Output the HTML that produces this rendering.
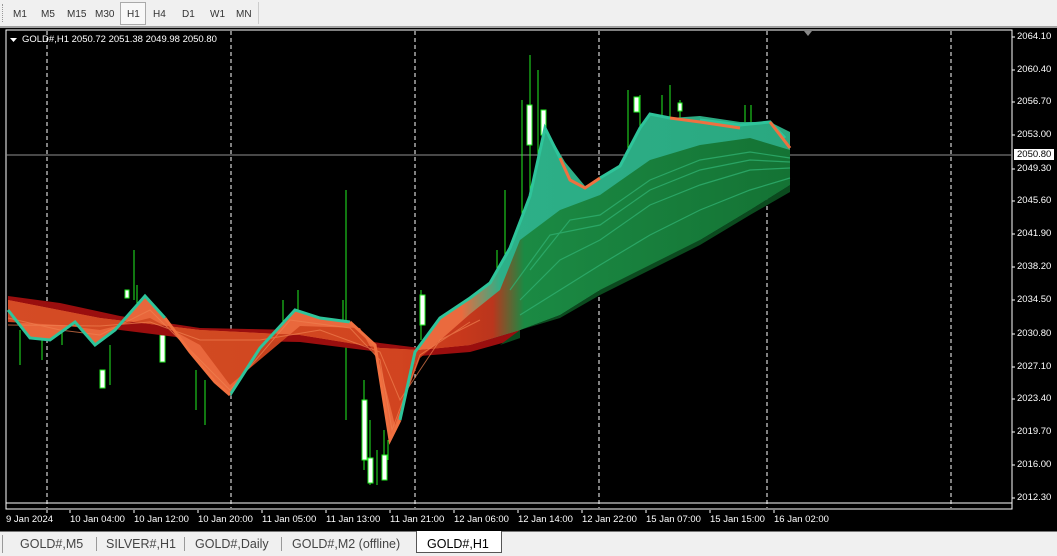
<!DOCTYPE html><html><head><meta charset="utf-8"><style>
body{margin:0;width:1057px;height:555px;overflow:hidden;background:#000;font-family:"Liberation Sans",Tahoma,sans-serif;position:relative}
.tb{position:absolute;left:0;top:0;width:1057px;height:26px;background:#f0f0f0;border-bottom:2px solid #a0a0a0}
.tb span{position:absolute;top:9px;font-size:10px;color:#333}
.tabs{position:absolute;left:0;top:531px;width:1057px;height:24px;background:#f0f0f0;border-top:1px solid #777}
.tabs span{position:absolute;top:5px;font-size:12.5px;color:#444}
.pl{position:absolute;left:1017px;font-size:9.5px;color:#fff}
.tl{position:absolute;top:514px;font-size:9.5px;color:#fff}
</style></head><body>
<div class="tb">
<div style="position:absolute;left:2px;top:4px;width:3px;height:18px;border-left:1px dotted #999"></div>
<span style="left:13px">M1</span><span style="left:41px">M5</span><span style="left:67px">M15</span><span style="left:95px">M30</span>
<div style="position:absolute;left:120px;top:2px;width:24px;height:21px;border:1px solid #aaa;background:#f8f8f8"></div>
<span style="left:127px">H1</span><span style="left:153px">H4</span><span style="left:182px">D1</span><span style="left:210px">W1</span><span style="left:236px">MN</span>
<div style="position:absolute;left:258px;top:2px;height:22px;border-left:1px solid #ccc"></div>
</div>
<svg style="position:absolute;left:0;top:28px" width="1057" height="503" viewBox="0 28 1057 503">
<defs>
<linearGradient id="g1" x1="8" x2="790" gradientUnits="userSpaceOnUse" y1="0" y2="0">
<stop offset="0" stop-color="#e8653a"/><stop offset="0.58" stop-color="#ea6a3e"/><stop offset="0.63" stop-color="#2db088"/><stop offset="1" stop-color="#2aa880"/></linearGradient>
<linearGradient id="g2" x1="8" x2="790" gradientUnits="userSpaceOnUse" y1="0" y2="0">
<stop offset="0" stop-color="#d44a24"/><stop offset="0.25" stop-color="#d04820"/><stop offset="0.5" stop-color="#d0421e"/><stop offset="0.62" stop-color="#c03018"/><stop offset="0.66" stop-color="#1a8840"/><stop offset="1" stop-color="#137030"/></linearGradient>
</defs>
<rect x="6" y="30" width="1006" height="479" fill="none" stroke="#fff"/>
<line x1="6" y1="503" x2="1012" y2="503" stroke="#fff"/>
<g stroke="#fff" stroke-dasharray="4,3"><line x1="47" y1="31" x2="47" y2="508"/><line x1="231" y1="31" x2="231" y2="508"/><line x1="415" y1="31" x2="415" y2="508"/><line x1="599" y1="31" x2="599" y2="508"/><line x1="767" y1="31" x2="767" y2="508"/><line x1="951" y1="31" x2="951" y2="508"/></g>
<line x1="6" y1="155" x2="1012" y2="155" stroke="#909090"/>
<polygon points="804,31 812,31 808,36" fill="#888"/>
<g fill="none" stroke="#22ee22" stroke-width="1" shape-rendering="crispEdges">
<path d="M134 250V300M137 285V305M346 190V420M364 380V470M370 420V485M377 450V485M384 430V480M388 440V460M421 290V340M497 250V300M505 190V270M522 100V215M530 55V200M538 70V250M544 130V230M554 180V230M628 90V175M640 95V155M662 95V135M670 85V120M680 100V125M745 105V125M751 105V125M343 300V345M298 290V330M283 300V340M110 345V385M205 380V425M196 370V410M20 330V365M42 335V360M62 320V345"/>
</g>
<g fill="#fff" stroke="#22ee22" shape-rendering="crispEdges"><rect x="362" y="400" width="5" height="60"/><rect x="368" y="458" width="5" height="25"/><rect x="382" y="455" width="5" height="25"/><rect x="420" y="295" width="5" height="30"/><rect x="527" y="105" width="5" height="40"/><rect x="541" y="110" width="5" height="25"/><rect x="634" y="97" width="5" height="15"/><rect x="678" y="103" width="4" height="8"/><rect x="125" y="290" width="4" height="8"/><rect x="100" y="370" width="5" height="18"/><rect x="160" y="335" width="5" height="27"/></g>
<polygon fill="#9a0e0e" points="8,296 60,303 120,316 200,328 300,330 380,343 420,348 470,343 520,328 520,338 470,352 420,356 380,352 300,342 200,340 120,330 60,318 8,312"/>
<polygon fill="url(#g1)" points="8,310 30,338 50,340 75,322 95,345 115,330 145,296 165,318 190,352 215,382 230,395 260,348 295,310 320,318 350,322 375,345 390,440 400,420 415,352 440,318 470,298 490,283 510,248 530,196 545,128 565,162 585,186 600,178 620,166 640,128 650,114 670,118 700,116 740,122 770,122 790,132 790,185 750,210 700,240 650,265 600,290 560,315 520,330 470,345 420,350 380,348 300,335 200,330 100,318 8,300"/>
<polygon fill="url(#g2)" opacity="0.95" points="8,322 60,325 100,330 150,318 200,345 230,385 300,326 360,328 380,365 395,425 420,358 470,314 500,290 520,240 560,210 600,195 650,160 700,145 750,138 790,150 790,185 750,210 700,240 650,265 600,290 560,315 520,330 470,345 420,350 380,348 300,335 200,330 100,318 8,300"/>
<polygon fill="#0b4a1e" points="520,330 560,318 600,295 650,270 700,245 750,215 790,192 790,185 750,210 700,240 650,265 600,290 560,315 520,330 500,345 520,338"/>
<g fill="none" stroke="#2fb070" stroke-width="1.2" opacity="0.8"><path d="M520,300 560,260 600,240 650,205 700,185 750,170 790,168"/><path d="M520,315 560,290 600,265 650,235 700,210 750,190 790,178"/><path d="M530,270 570,220 600,215 650,180 700,160 750,152 790,158"/><path d="M510,290 550,235 600,225 650,190 700,170 750,160 790,162"/></g>
<g fill="none" stroke="#f08050" stroke-width="1" opacity="0.7"><path d="M8,318 60,330 100,335 150,310 200,360 230,390 290,320 350,328 380,360 392,430 420,355 470,322"/><path d="M8,325 100,326 150,322 200,340 260,340 320,330 380,352 400,400 440,340 480,320"/></g>
<path fill="none" stroke="#2ec49a" stroke-width="3" d="M8,310 30,338 50,340 75,322 95,345 115,330 145,296 165,318 M230,395 260,348 295,310 320,318 350,322 M400,420 415,352 440,318 470,298 490,283 510,248 530,196 545,128 560,158 M600,178 620,166 640,128 650,114 670,118 M700,120 740,125 770,122 785,138"/>
<path fill="none" stroke="#f07040" stroke-width="3" d="M165,318 190,352 215,382 230,395 M350,322 375,345 390,440 400,420 M560,158 570,180 585,188 600,178 M670,118 700,122 740,128 M770,122 790,148"/>
<g font-family="Liberation Sans,sans-serif" font-size="9.5" fill="#fff"><polygon points="10,38 17,38 13.5,42" fill="#fff"/><text x="22" y="42">GOLD#,H1  2050.72 2051.38 2049.98 2050.80</text></g>
<g stroke="#fff"><line x1="1012" y1="37" x2="1015" y2="37"/><line x1="1012" y1="70" x2="1015" y2="70"/><line x1="1012" y1="102" x2="1015" y2="102"/><line x1="1012" y1="135" x2="1015" y2="135"/><line x1="1012" y1="169" x2="1015" y2="169"/><line x1="1012" y1="201" x2="1015" y2="201"/><line x1="1012" y1="234" x2="1015" y2="234"/><line x1="1012" y1="267" x2="1015" y2="267"/><line x1="1012" y1="300" x2="1015" y2="300"/><line x1="1012" y1="334" x2="1015" y2="334"/><line x1="1012" y1="367" x2="1015" y2="367"/><line x1="1012" y1="399" x2="1015" y2="399"/><line x1="1012" y1="432" x2="1015" y2="432"/><line x1="1012" y1="465" x2="1015" y2="465"/><line x1="1012" y1="498" x2="1015" y2="498"/></g>
<g stroke="#fff"><line x1="47" y1="510" x2="47" y2="513"/><line x1="70" y1="510" x2="70" y2="513"/><line x1="134" y1="510" x2="134" y2="513"/><line x1="198" y1="510" x2="198" y2="513"/><line x1="262" y1="510" x2="262" y2="513"/><line x1="326" y1="510" x2="326" y2="513"/><line x1="390" y1="510" x2="390" y2="513"/><line x1="454" y1="510" x2="454" y2="513"/><line x1="518" y1="510" x2="518" y2="513"/><line x1="582" y1="510" x2="582" y2="513"/><line x1="646" y1="510" x2="646" y2="513"/><line x1="710" y1="510" x2="710" y2="513"/><line x1="774" y1="510" x2="774" y2="513"/></g>
</svg>
<div class="pl" style="top:31px">2064.10</div><div class="pl" style="top:64px">2060.40</div><div class="pl" style="top:96px">2056.70</div><div class="pl" style="top:129px">2053.00</div>
<div class="pl" style="top:149px;background:#fff;color:#000;left:1014px;padding:0 3px">2050.80</div>
<div class="pl" style="top:163px">2049.30</div><div class="pl" style="top:195px">2045.60</div><div class="pl" style="top:228px">2041.90</div><div class="pl" style="top:261px">2038.20</div><div class="pl" style="top:294px">2034.50</div><div class="pl" style="top:328px">2030.80</div><div class="pl" style="top:361px">2027.10</div><div class="pl" style="top:393px">2023.40</div><div class="pl" style="top:426px">2019.70</div><div class="pl" style="top:459px">2016.00</div><div class="pl" style="top:492px">2012.30</div>
<div class="tl" style="left:6px">9 Jan 2024</div><div class="tl" style="left:70px">10 Jan 04:00</div><div class="tl" style="left:134px">10 Jan 12:00</div><div class="tl" style="left:198px">10 Jan 20:00</div><div class="tl" style="left:262px">11 Jan 05:00</div><div class="tl" style="left:326px">11 Jan 13:00</div><div class="tl" style="left:390px">11 Jan 21:00</div><div class="tl" style="left:454px">12 Jan 06:00</div><div class="tl" style="left:518px">12 Jan 14:00</div><div class="tl" style="left:582px">12 Jan 22:00</div><div class="tl" style="left:646px">15 Jan 07:00</div><div class="tl" style="left:710px">15 Jan 15:00</div><div class="tl" style="left:774px">16 Jan 02:00</div>
<div class="tabs">
<div style="position:absolute;left:2px;top:3px;height:18px;border-left:1px solid #999"></div>
<span style="left:20px">GOLD#,M5</span><div style="position:absolute;left:96px;top:5px;height:14px;border-left:1px solid #999"></div>
<span style="left:106px">SILVER#,H1</span><div style="position:absolute;left:184px;top:5px;height:14px;border-left:1px solid #999"></div>
<span style="left:195px">GOLD#,Daily</span><div style="position:absolute;left:281px;top:5px;height:14px;border-left:1px solid #999"></div>
<span style="left:292px">GOLD#,M2 (offline)</span>
<div style="position:absolute;left:416px;top:-1px;width:84px;height:21px;background:#fff;border:1px solid #555;border-top:none"></div>
<span style="left:427px;color:#000">GOLD#,H1</span>
</div>
</body></html>
